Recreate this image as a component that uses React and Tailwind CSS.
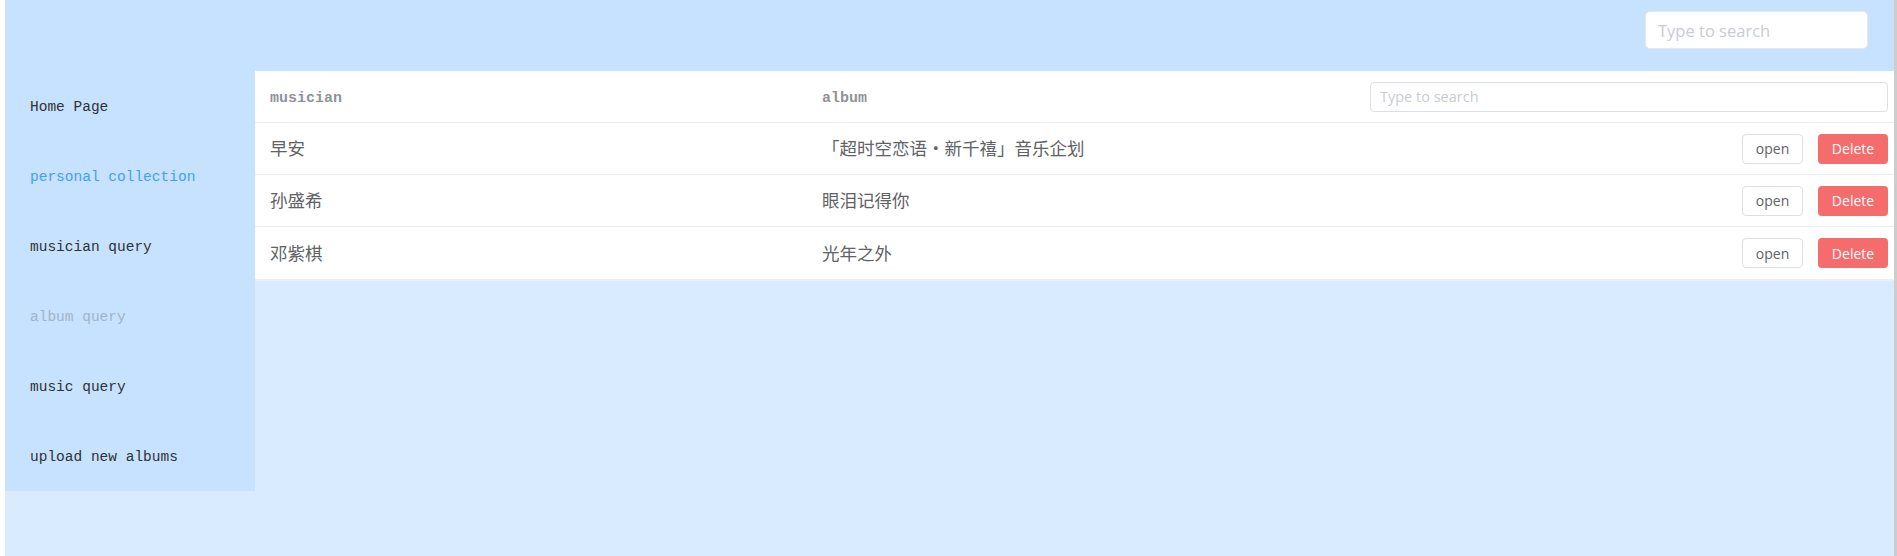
import { useState } from "react";

const navItems = [
  { label: "Home Page", cls: "text-[#303133]" },
  { label: "personal collection", cls: "text-[#409eff]" },
  { label: "musician query", cls: "text-[#303133]" },
  { label: "album query", cls: "text-[#a3b3c6]" },
  { label: "music query", cls: "text-[#303133]" },
  { label: "upload new albums", cls: "text-[#303133]" },
];

const initialRows = [
  { id: 1, musician: "早安", album: "「超时空恋语・新千禧」音乐企划" },
  { id: 2, musician: "孙盛希", album: "眼泪记得你" },
  { id: 3, musician: "邓紫棋", album: "光年之外" },
];

const mono = "font-['Liberation_Mono',monospace]";
const cjk = "font-['Noto_Sans_CJK_SC','Noto_Sans',sans-serif]";
const ui = "font-['Open_Sans','Noto_Sans_CJK_SC',sans-serif]";

const App = () => {
  const [rows, setRows] = useState(initialRows);
  const [search, setSearch] = useState("");
  const [filter, setFilter] = useState("");

  const shown = rows.filter(
    (r) => !filter || r.musician.includes(filter) || r.album.includes(filter)
  );

  return (
    <div className="h-[556px] flex flex-col bg-[#d9ecff] border-l-[5px] border-l-white border-r-[3px] border-r-[#cdcdcd]">
      <header className="h-[71px] shrink-0 bg-[#c6e2ff] flex justify-end items-start pt-[11px] pr-[26px]">
        <input
          type="text"
          value={search}
          onChange={(e) => setSearch(e.target.value)}
          placeholder="Type to search"
          className={`${ui} w-[223px] h-[38px] bg-white border border-[#e4e7ed] rounded-[5px] px-3 text-[16.5px] text-[#606266] placeholder:text-[#c8ccd3] outline-none`}
        />
      </header>

      <div className="flex flex-1 items-start">
        <aside className="w-[250px] shrink-0 bg-[#c6e2ff]">
          {navItems.map((item) => (
            <div
              key={item.label}
              className={`${mono} ${item.cls} h-[70px] flex items-center pl-[25px] pt-[4px] text-[14.5px] cursor-pointer`}
            >
              {item.label}
            </div>
          ))}
        </aside>

        <div className="flex-1 bg-white border-b-2 border-[#ebeef5]">
          <div className="flex h-[52px] items-center border-b border-[#ebeef5]">
            <div className={`${mono} w-[552px] pl-[15px] pt-[5px] text-[15px] font-bold text-[#909399]`}>musician</div>
            <div className={`${mono} w-[548px] pl-[15px] pt-[5px] text-[15px] font-bold text-[#909399]`}>album</div>
            <div className="flex-1 pl-[15px] pr-[6px]">
              <input
                type="text"
                value={filter}
                onChange={(e) => setFilter(e.target.value)}
                placeholder="Type to search"
                className={`${ui} w-full h-[30px] border border-[#dcdfe6] rounded-[4px] pl-[9px] text-[14.5px] text-[#606266] placeholder:text-[#c8ccd3] outline-none`}
              />
            </div>
          </div>

          {shown.map((row, idx) => (
            <div
              key={row.id}
              className={`flex h-[52px] items-center ${idx < shown.length - 1 ? "border-b border-[#ebeef5]" : ""}`}
            >
              <div className={`${cjk} w-[552px] pl-[15px] text-[17.5px] text-[#606266]`}>{row.musician}</div>
              <div className={`${cjk} w-[548px] pl-[15px] text-[17.5px] text-[#606266]`}>{row.album}</div>
              <div className="flex-1 flex justify-end gap-[15px] pr-[6px]">
                <button className={`${ui} w-[61px] h-[30px] bg-white border border-[#dcdfe6] rounded-[4px] text-[14px] text-[#606266]`}>
                  open
                </button>
                <button
                  onClick={() => setRows(rows.filter((r) => r.id !== row.id))}
                  className={`${ui} w-[70px] h-[30px] bg-[#f56c6c] rounded-[4px] text-[14px] text-white`}
                >
                  Delete
                </button>
              </div>
            </div>
          ))}
        </div>
      </div>
    </div>
  );
};

export default App;
